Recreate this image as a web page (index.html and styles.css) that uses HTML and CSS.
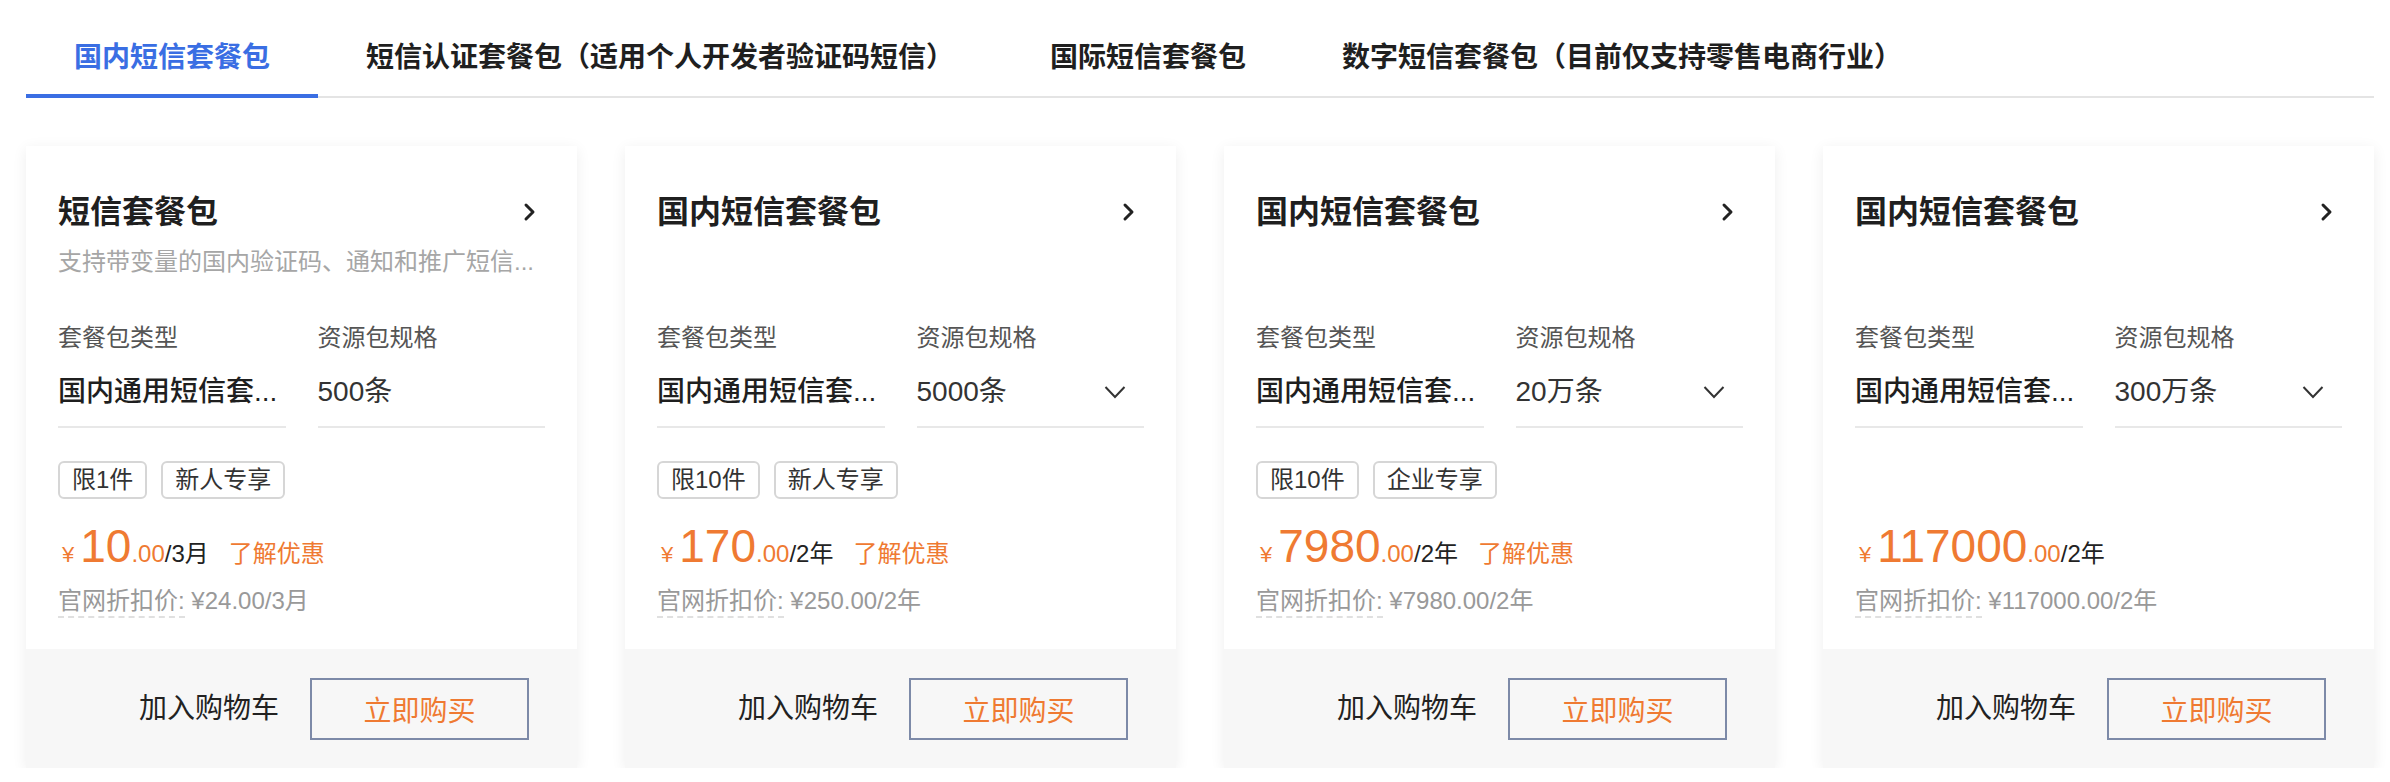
FILE: index.html
```html
<!DOCTYPE html>
<html lang="zh-CN">
<head>
<meta charset="utf-8">
<title>短信套餐包</title>
<link rel="stylesheet" href="styles.css">
</head>
<body>
<div class="page">
  <nav class="tabs">
    <div class="tab active">国内短信套餐包</div>
    <div class="tab">短信认证套餐包（适用个人开发者验证码短信）</div>
    <div class="tab">国际短信套餐包</div>
    <div class="tab">数字短信套餐包（目前仅支持零售电商行业）</div>
  </nav>

  <div class="cards">
    <!-- card 1 -->
    <div class="card">
      <div class="card-body">
        <div class="card-head">
          <div class="card-title">短信套餐包</div>
          <svg class="arrow" width="24" height="24" viewBox="0 0 24 24"><path d="M9 5l7 7-7 7" fill="none" stroke="#222" stroke-width="3" stroke-linecap="round" stroke-linejoin="round"/></svg>
        </div>
        <div class="card-desc">支持带变量的国内验证码、通知和推广短信...</div>
        <div class="fields">
          <div class="field">
            <div class="field-label">套餐包类型</div>
            <div class="field-value"><span class="val strong">国内通用短信套...</span></div>
          </div>
          <div class="field">
            <div class="field-label">资源包规格</div>
            <div class="field-value"><span class="val">500条</span></div>
          </div>
        </div>
        <div class="tags"><span class="tag">限1件</span><span class="tag">新人专享</span></div>
        <div class="price"><span class="cur">¥</span><span class="amt">10</span><span class="dec">.00</span><span class="unit">/3月</span><span class="promo">了解优惠</span></div>
        <div class="orig"><span class="dashed">官网折扣价:</span> ¥24.00/3月</div>
      </div>
      <div class="card-foot">
        <span class="cart">加入购物车</span>
        <span class="buy">立即购买</span>
      </div>
    </div>

    <!-- card 2 -->
    <div class="card">
      <div class="card-body">
        <div class="card-head">
          <div class="card-title">国内短信套餐包</div>
          <svg class="arrow" width="24" height="24" viewBox="0 0 24 24"><path d="M9 5l7 7-7 7" fill="none" stroke="#222" stroke-width="3" stroke-linecap="round" stroke-linejoin="round"/></svg>
        </div>
        <div class="card-desc"></div>
        <div class="fields">
          <div class="field">
            <div class="field-label">套餐包类型</div>
            <div class="field-value"><span class="val strong">国内通用短信套...</span></div>
          </div>
          <div class="field">
            <div class="field-label">资源包规格</div>
            <div class="field-value"><span class="val">5000条</span><svg class="caret" width="22" height="14" viewBox="0 0 22 14"><path d="M1.5 2l9.5 10 9.5-10" fill="none" stroke="#333" stroke-width="2"/></svg></div>
          </div>
        </div>
        <div class="tags"><span class="tag">限10件</span><span class="tag">新人专享</span></div>
        <div class="price"><span class="cur">¥</span><span class="amt">170</span><span class="dec">.00</span><span class="unit">/2年</span><span class="promo">了解优惠</span></div>
        <div class="orig"><span class="dashed">官网折扣价:</span> ¥250.00/2年</div>
      </div>
      <div class="card-foot">
        <span class="cart">加入购物车</span>
        <span class="buy">立即购买</span>
      </div>
    </div>

    <!-- card 3 -->
    <div class="card">
      <div class="card-body">
        <div class="card-head">
          <div class="card-title">国内短信套餐包</div>
          <svg class="arrow" width="24" height="24" viewBox="0 0 24 24"><path d="M9 5l7 7-7 7" fill="none" stroke="#222" stroke-width="3" stroke-linecap="round" stroke-linejoin="round"/></svg>
        </div>
        <div class="card-desc"></div>
        <div class="fields">
          <div class="field">
            <div class="field-label">套餐包类型</div>
            <div class="field-value"><span class="val strong">国内通用短信套...</span></div>
          </div>
          <div class="field">
            <div class="field-label">资源包规格</div>
            <div class="field-value"><span class="val">20万条</span><svg class="caret" width="22" height="14" viewBox="0 0 22 14"><path d="M1.5 2l9.5 10 9.5-10" fill="none" stroke="#333" stroke-width="2"/></svg></div>
          </div>
        </div>
        <div class="tags"><span class="tag">限10件</span><span class="tag">企业专享</span></div>
        <div class="price"><span class="cur">¥</span><span class="amt">7980</span><span class="dec">.00</span><span class="unit">/2年</span><span class="promo">了解优惠</span></div>
        <div class="orig"><span class="dashed">官网折扣价:</span> ¥7980.00/2年</div>
      </div>
      <div class="card-foot">
        <span class="cart">加入购物车</span>
        <span class="buy">立即购买</span>
      </div>
    </div>

    <!-- card 4 -->
    <div class="card">
      <div class="card-body">
        <div class="card-head">
          <div class="card-title">国内短信套餐包</div>
          <svg class="arrow" width="24" height="24" viewBox="0 0 24 24"><path d="M9 5l7 7-7 7" fill="none" stroke="#222" stroke-width="3" stroke-linecap="round" stroke-linejoin="round"/></svg>
        </div>
        <div class="card-desc"></div>
        <div class="fields">
          <div class="field">
            <div class="field-label">套餐包类型</div>
            <div class="field-value"><span class="val strong">国内通用短信套...</span></div>
          </div>
          <div class="field">
            <div class="field-label">资源包规格</div>
            <div class="field-value"><span class="val">300万条</span><svg class="caret" width="22" height="14" viewBox="0 0 22 14"><path d="M1.5 2l9.5 10 9.5-10" fill="none" stroke="#333" stroke-width="2"/></svg></div>
          </div>
        </div>
        <div class="tags"></div>
        <div class="price"><span class="cur">¥</span><span class="amt">117000</span><span class="dec">.00</span><span class="unit">/2年</span></div>
        <div class="orig"><span class="dashed">官网折扣价:</span> ¥117000.00/2年</div>
      </div>
      <div class="card-foot">
        <span class="cart">加入购物车</span>
        <span class="buy">立即购买</span>
      </div>
    </div>
  </div>
</div>
</body>
</html>
```

FILE: styles.css
```css
* { box-sizing: border-box; }

html, body {
  margin: 0;
  background: #ffffff;
}

body {
  font-family: "Liberation Sans", "Noto Sans CJK SC", sans-serif;
  color: #222;
}

.page {
  padding: 0 16px 0 26px;
}

/* Tabs */
.tabs {
  display: flex;
  border-bottom: 2px solid #e4e4e4;
}

.tab {
  padding: 38px 48px 16px;
  font-size: 28px;
  line-height: 40px;
  font-weight: 700;
  color: #1f1f1f;
  border-bottom: 4px solid transparent;
  margin-bottom: -2px;
  white-space: nowrap;
}

.tab.active {
  color: #3a6ee3;
  border-bottom-color: #3a6ee3;
}

/* Cards */
.cards {
  display: grid;
  grid-template-columns: repeat(4, minmax(0, 1fr));
  gap: 48px;
  margin-top: 48px;
}

.card {
  background: #fff;
  box-shadow: 0 3px 14px rgba(0, 0, 0, 0.07);
  display: flex;
  flex-direction: column;
  min-width: 0;
}

.card-body {
  padding: 44px 32px 30px;
}

.card-head {
  display: flex;
  align-items: center;
  justify-content: space-between;
  height: 44px;
}

.card-title {
  font-size: 32px;
  line-height: 44px;
  font-weight: 700;
  color: #1f1f1f;
}

.arrow {
  margin-right: 4px;
}

.card-desc {
  margin-top: 10px;
  height: 36px;
  font-size: 24px;
  line-height: 36px;
  color: #a6a6a6;
  white-space: nowrap;
}

.fields {
  margin-top: 40px;
  display: grid;
  grid-template-columns: minmax(0, 1fr) minmax(0, 1fr);
  column-gap: 32px;
}

.field {
  min-width: 0;
}

.field-label {
  font-size: 24px;
  line-height: 36px;
  color: #555;
}

.field-value {
  margin-top: 16px;
  height: 56px;
  padding-bottom: 14px;
  border-bottom: 2px solid #e8e8e8;
  display: flex;
  align-items: center;
  justify-content: space-between;
  font-size: 28px;
  line-height: 40px;
  color: #333;
}

.val {
  white-space: nowrap;
}

.val.strong {
  color: #1f1f1f;
  font-weight: 500;
}

.caret {
  flex: none;
  margin-right: 18px;
}

.tags {
  margin-top: 33px;
  height: 38px;
  display: flex;
  gap: 14px;
}

.tag {
  display: inline-block;
  height: 38px;
  padding: 0 12px;
  border: 2px solid #d6d6d6;
  border-radius: 6px;
  font-size: 24px;
  line-height: 34px;
  color: #333;
}

.price {
  margin-top: 19px;
  height: 56px;
  line-height: 56px;
  white-space: nowrap;
  font-size: 24px;
}

.cur {
  font-size: 22px;
  color: #ef7a32;
  margin: 0 6px 0 4px;
}

.amt {
  font-size: 46px;
  color: #ef7a32;
}

.dec {
  font-size: 24px;
  color: #ef7a32;
}

.unit {
  font-size: 24px;
  color: #222;
}

.promo {
  margin-left: 20px;
  font-size: 24px;
  color: #ef7a32;
}

.orig {
  margin-top: 9px;
  font-size: 24px;
  line-height: 36px;
  color: #999;
  white-space: nowrap;
}

.dashed {
  border-bottom: 2px dashed #e0e0e0;
  padding-bottom: 2px;
}

.card-foot {
  margin-top: auto;
  height: 119px;
  background: #f7f7f7;
  display: flex;
  align-items: center;
  justify-content: flex-end;
  gap: 31px;
  padding-right: 48px;
}

.cart {
  font-size: 28px;
  line-height: 40px;
  color: #222;
}

.buy {
  width: 219px;
  height: 62px;
  border: 2px solid #7d8aa8;
  display: flex;
  align-items: center;
  justify-content: center;
  font-size: 28px;
  color: #ef7a32;
}
```
